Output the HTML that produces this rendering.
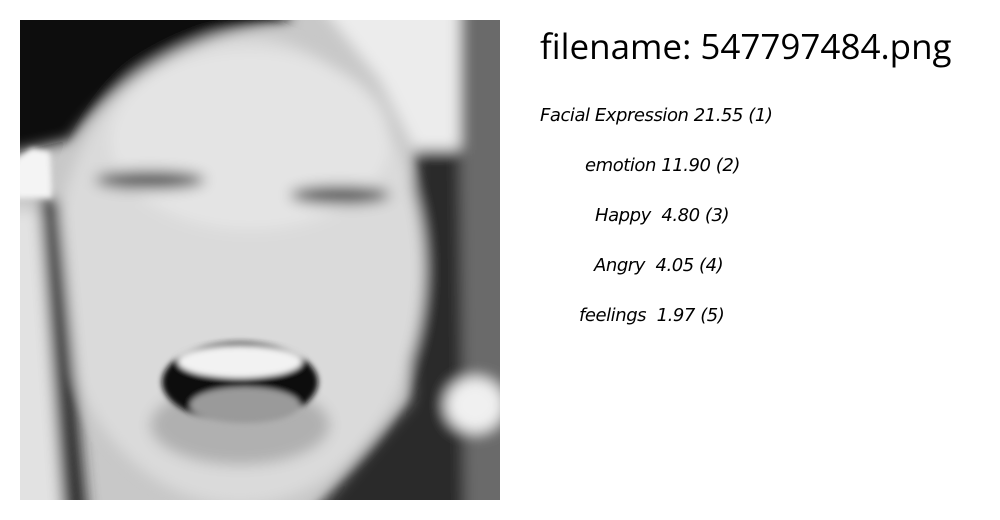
<!DOCTYPE html>
<html><head><style>
html,body{margin:0;padding:0;background:#fff;width:1000px;height:520px;overflow:hidden}
#img{position:absolute;left:20px;top:20px;width:480px;height:480px}
.t{position:absolute;font-family:"Open Sans","Liberation Sans","DejaVu Sans",sans-serif;color:#000;white-space:nowrap}
h1{position:absolute;left:540px;top:23px;margin:0;font-weight:normal;font-size:35px;font-family:"Open Sans","DejaVu Sans","Liberation Sans",sans-serif;letter-spacing:0px}
.i{font-style:italic;font-size:18px;font-family:"DejaVu Sans","Liberation Sans",sans-serif;letter-spacing:-0.45px}
</style></head><body>
<svg id="img" viewBox="0 0 480 480" xmlns="http://www.w3.org/2000/svg">
<defs>
<filter id="b" x="-50%" y="-50%" width="200%" height="200%"><feGaussianBlur stdDeviation="7"/></filter>
<filter id="b2" x="-50%" y="-50%" width="200%" height="200%"><feGaussianBlur stdDeviation="3"/></filter>
<clipPath id="c"><rect width="480" height="480"/></clipPath>
</defs>
<g clip-path="url(#c)">
<rect width="480" height="480" fill="#c8c8c8"/>
<g filter="url(#b)">
<rect x="430" y="-40" width="100" height="560" fill="#6a6a6a"/>
<path d="M280 -40 L440 -40 L440 140 L400 140 L360 60 Z" fill="#ececec"/>
<path d="M395 130 L440 130 L445 520 L270 520 L390 380 Z" fill="#2a2a2a"/>
<ellipse cx="220" cy="250" rx="185" ry="235" fill="#dadada"/>
<ellipse cx="230" cy="120" rx="140" ry="90" fill="#e4e4e4"/>
<path d="M-40 -40 L260 -40 L270 0 C190 10 110 40 50 120 L-40 140 Z" fill="#0e0e0e"/>
<path d="M-40 190 L40 190 L60 520 L-40 520 Z" fill="#e2e2e2"/>
<path d="M20 180 L38 180 L70 520 L45 520 Z" fill="#2a2a2a"/>
<ellipse cx="455" cy="385" rx="30" ry="28" fill="#f0f0f0"/>
<ellipse cx="130" cy="160" rx="55" ry="9" fill="#4a4a4a"/>
<ellipse cx="320" cy="175" rx="50" ry="9" fill="#4a4a4a"/>
<ellipse cx="220" cy="405" rx="90" ry="40" fill="#b0b0b0"/>
</g>
<g filter="url(#b2)">
<path d="M12 128 L30 132 L32 178 L-5 178 L-5 140 Z" fill="#f4f4f4"/>
<ellipse cx="220" cy="362" rx="78" ry="40" fill="#111"/>
<ellipse cx="220" cy="342" rx="62" ry="16" fill="#f2f2f2"/>
<ellipse cx="225" cy="385" rx="55" ry="18" fill="#9a9a9a"/>
</g>
</g>
</svg>
<h1>filename: 547797484.png</h1>
<div class="t i" style="left:540px;top:105px">Facial Expression 21.55 (1)</div>
<div class="t i" style="left:585px;top:155px">emotion 11.90 (2)</div>
<div class="t i" style="left:595px;top:205px">Happy&nbsp; 4.80 (3)</div>
<div class="t i" style="left:594px;top:255px">Angry&nbsp; 4.05 (4)</div>
<div class="t i" style="left:579px;top:305px">feelings&nbsp; 1.97 (5)</div>
</body></html>
